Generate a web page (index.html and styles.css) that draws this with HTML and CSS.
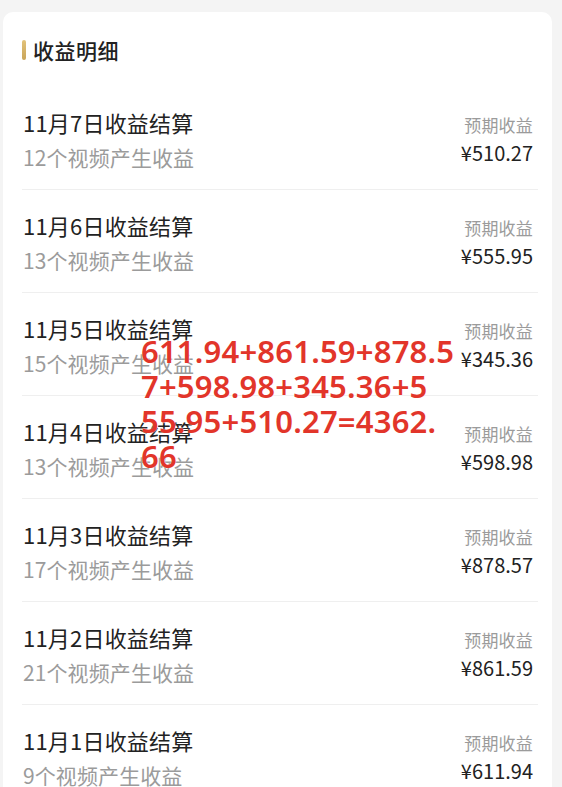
FILE: index.html
```html
<!DOCTYPE html>
<html lang="zh-CN">
<head>
<meta charset="utf-8">
<title>收益明细</title>
<link rel="stylesheet" href="styles.css">
</head>
<body>
<div class="page">
  <div class="card">
    <div class="header"><span class="bar"></span><span class="header-title">收益明细</span></div>
    <div class="row">
      <div class="left"><div class="title">11月7日收益结算</div><div class="sub">12个视频产生收益</div></div>
      <div class="right"><div class="label">预期收益</div><div class="amount">¥510.27</div></div>
    </div>
    <div class="row">
      <div class="left"><div class="title">11月6日收益结算</div><div class="sub">13个视频产生收益</div></div>
      <div class="right"><div class="label">预期收益</div><div class="amount">¥555.95</div></div>
    </div>
    <div class="row">
      <div class="left"><div class="title">11月5日收益结算</div><div class="sub">15个视频产生收益</div></div>
      <div class="right"><div class="label">预期收益</div><div class="amount">¥345.36</div></div>
    </div>
    <div class="row">
      <div class="left"><div class="title">11月4日收益结算</div><div class="sub">13个视频产生收益</div></div>
      <div class="right"><div class="label">预期收益</div><div class="amount">¥598.98</div></div>
    </div>
    <div class="row">
      <div class="left"><div class="title">11月3日收益结算</div><div class="sub">17个视频产生收益</div></div>
      <div class="right"><div class="label">预期收益</div><div class="amount">¥878.57</div></div>
    </div>
    <div class="row">
      <div class="left"><div class="title">11月2日收益结算</div><div class="sub">21个视频产生收益</div></div>
      <div class="right"><div class="label">预期收益</div><div class="amount">¥861.59</div></div>
    </div>
    <div class="row">
      <div class="left"><div class="title">11月1日收益结算</div><div class="sub">9个视频产生收益</div></div>
      <div class="right"><div class="label">预期收益</div><div class="amount">¥611.94</div></div>
    </div>
  </div>
  <div class="note">611.94+861.59+878.5<br>7+598.98+345.36+5<br>55.95+510.27=4362.<br>66</div>
</div>
</body>
</html>
```

FILE: styles.css
```css
html, body {
  margin: 0;
  padding: 0;
  background: #f4f4f4;
  overflow: hidden;
}
body {
  font-family: "Noto Sans CJK SC", "Noto Sans", sans-serif;
  width: 562px;
  height: 787px;
}
.page {
  position: relative;
  padding: 12px 10px 0 3px;
}
.card {
  background: #ffffff;
  border-radius: 10px;
  padding: 0 14px 0 19px;
}
.header {
  display: flex;
  align-items: center;
  gap: 7px;
  padding: 24px 0 23px 0;
  height: 28px;
}
.bar {
  width: 4px;
  height: 20px;
  border-radius: 2px;
  background: linear-gradient(180deg, #e2c27a, #c9a55a);
}
.header-title {
  font-size: 21px;
  line-height: 28px;
  color: #222;
  font-weight: 500;
  letter-spacing: 0.5px;
}
.row {
  display: flex;
  justify-content: space-between;
  height: 103px;
  box-sizing: border-box;
  padding: 18px 5px 0 1px;
  border-bottom: 1px solid #efefef;
}
.row:last-child {
  border-bottom: none;
}
.title {
  font-size: 22px;
  line-height: 34px;
  color: #222;
  letter-spacing: 0.2px;
}
.sub {
  font-size: 21px;
  line-height: 36px;
  color: #9b9b9b;
  letter-spacing: 0.1px;
}
.right {
  display: flex;
  flex-direction: column;
  align-items: flex-end;
  padding-top: 7px;
}
.label {
  font-size: 17px;
  line-height: 26px;
  color: #9b9b9b;
  letter-spacing: 0.2px;
}
.amount {
  font-size: 20px;
  line-height: 30px;
  color: #222;
}
.note {
  position: absolute;
  left: 141px;
  top: 334px;
  font-family: "Noto Sans", "Liberation Sans", sans-serif;
  font-weight: 600;
  font-size: 31px;
  line-height: 35px;
  letter-spacing: 0.2px;
  color: #e2352a;
  text-shadow: 0 0 2px rgba(255,255,255,0.9);
}
```
